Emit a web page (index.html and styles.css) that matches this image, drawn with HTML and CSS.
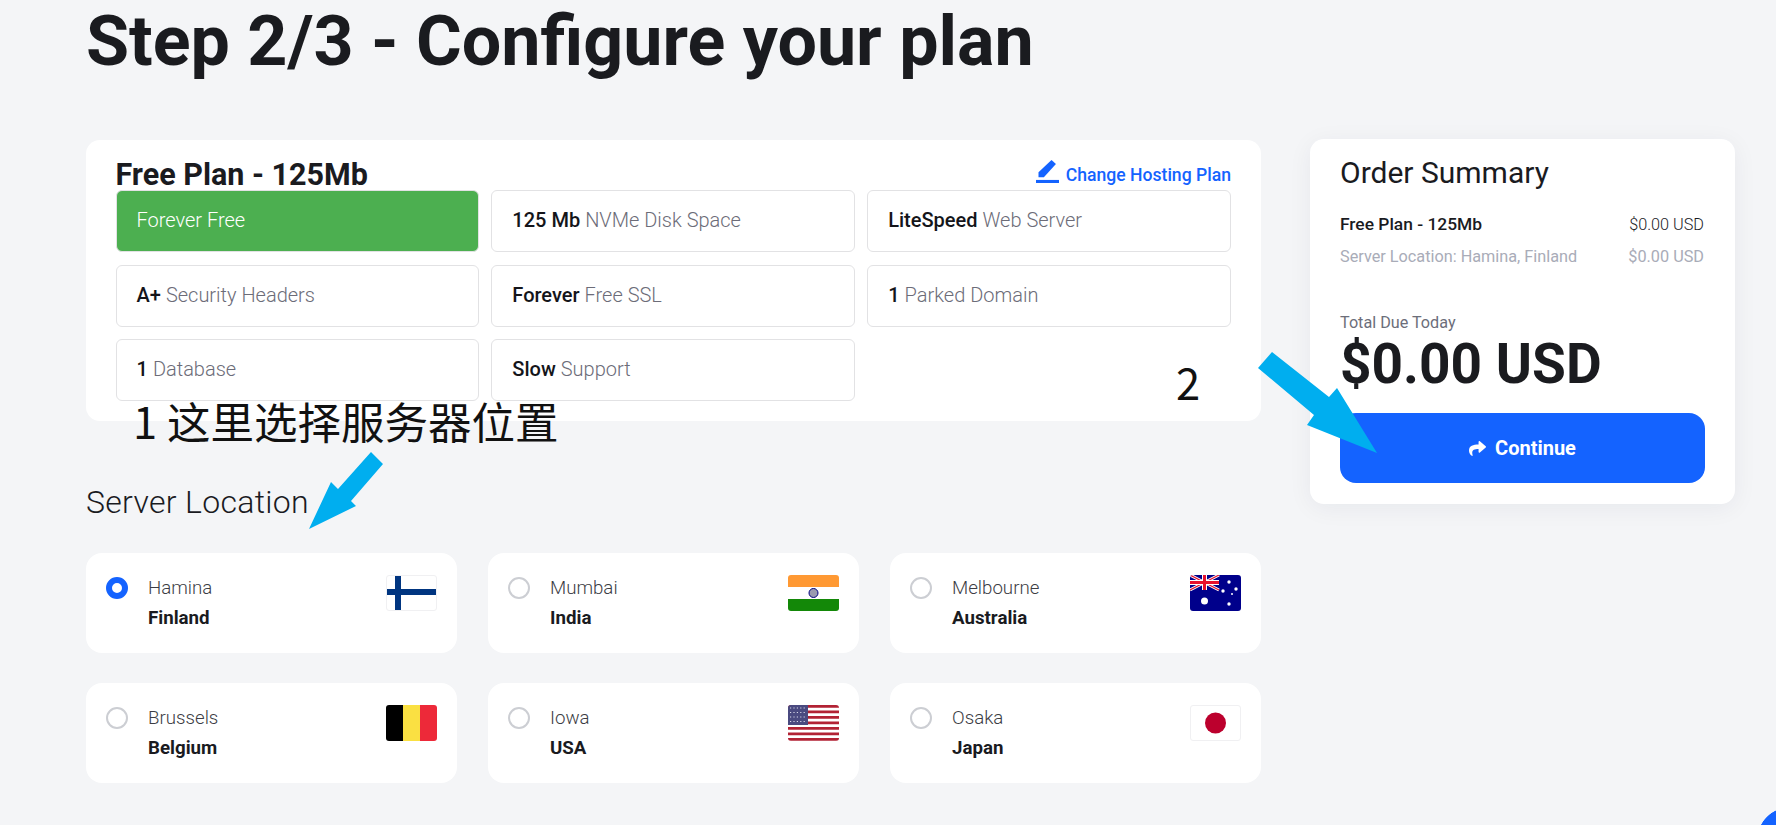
FILE: index.html
```html
<!DOCTYPE html>
<html lang="en">
<head>
  <meta charset="UTF-8">
  <title>Step 2/3 - Configure your plan</title>
  <link rel="stylesheet" href="styles.css">
</head>
<body>
  <h1 class="page-title">Step 2/3 - Configure your plan</h1>

  <div class="layout">
    <div class="main-col">
      <section class="plan-card">
        <div class="plan-head">
          <h2 class="plan-name">Free Plan - 125Mb</h2>
          <a class="change-link" href="#">
            <svg class="pencil" viewBox="0 0 24 24"><path d="M16.2 0l4.6 4.3-12.6 13.6H2.600v-5z"/><rect x="0" y="20.800" width="24" height="3.200"/></svg>
            Change Hosting Plan
          </a>
        </div>
        <div class="feature-grid">
          <div class="feature feature-green">Forever Free</div>
          <div class="feature"><b>125 Mb</b> NVMe Disk Space</div>
          <div class="feature"><b>LiteSpeed</b> Web Server</div>
          <div class="feature"><b>A+</b> Security Headers</div>
          <div class="feature"><b>Forever</b> Free SSL</div>
          <div class="feature"><b>1</b> Parked Domain</div>
          <div class="feature"><b>1</b> Database</div>
          <div class="feature"><b>Slow</b> Support</div>
        </div>
      </section>

      <h2 class="section-title">Server Location</h2>
      <div class="location-grid">
        <label class="location">
          <span class="radio radio-on"></span>
          <span class="location-text"><span class="city">Hamina</span><b class="country">Finland</b></span>
          <svg class="flag flag-light" viewBox="0 0 51 36"><rect width="51" height="36" fill="#fff"/><rect y="14" width="51" height="6" fill="#003580"/><rect x="9" width="6" height="36" fill="#003580"/></svg>
        </label>
        <label class="location">
          <span class="radio"></span>
          <span class="location-text"><span class="city">Mumbai</span><b class="country">India</b></span>
          <svg class="flag" viewBox="0 0 51 36"><rect width="51" height="12" fill="#ff9933"/><rect y="12" width="51" height="12" fill="#fff"/><rect y="24" width="51" height="12" fill="#138808"/><circle cx="25.500" cy="18" r="4.500" fill="#9a9ab0" stroke="#000080"/></svg>
        </label>
        <label class="location">
          <span class="radio"></span>
          <span class="location-text"><span class="city">Melbourne</span><b class="country">Australia</b></span>
          <svg class="flag" viewBox="0 0 51 36">
            <rect width="51" height="36" fill="#00008b"/>
            <path d="M0 0l29 15M29 0L0 15" stroke="#fff" stroke-width="3"/>
            <path d="M0 0l29 15M29 0L0 15" stroke="#e8112d" stroke-width="1.200"/>
            <path d="M14.500 0v15M0 7.500h29" stroke="#fff" stroke-width="5"/>
            <path d="M14.500 0v15M0 7.500h29" stroke="#e8112d" stroke-width="3"/>
            <circle cx="14.500" cy="26" r="3.500" fill="#fff"/>
            <circle cx="39" cy="7" r="1.700" fill="#fff"/>
            <circle cx="33" cy="16" r="1.700" fill="#fff"/>
            <circle cx="46" cy="14" r="1.700" fill="#fff"/>
            <circle cx="42" cy="19" r="1" fill="#fff"/>
            <circle cx="39" cy="29" r="1.700" fill="#fff"/>
          </svg>
        </label>
        <label class="location">
          <span class="radio"></span>
          <span class="location-text"><span class="city">Brussels</span><b class="country">Belgium</b></span>
          <svg class="flag" viewBox="0 0 51 36"><rect width="17" height="36" fill="#000"/><rect x="17" width="17" height="36" fill="#fae042"/><rect x="34" width="17" height="36" fill="#ed2939"/></svg>
        </label>
        <label class="location">
          <span class="radio"></span>
          <span class="location-text"><span class="city">Iowa</span><b class="country">USA</b></span>
          <svg class="flag" viewBox="0 0 51 36">
            <rect width="51" height="36" fill="#fff"/>
            <path d="M0 1.400h51M0 6.900h51M0 12.400h51M0 17.900h51M0 23.400h51M0 28.900h51M0 34.400h51" stroke="#b22234" stroke-width="2.800"/>
            <rect width="20" height="20" fill="#4a4a80"/>
            <path d="M2 3h16M2 7.500h16M2 12h16M2 16.500h16" stroke="#d8d8e8" stroke-width="1.200" stroke-dasharray="1.200 2.200"/>
          </svg>
        </label>
        <label class="location">
          <span class="radio"></span>
          <span class="location-text"><span class="city">Osaka</span><b class="country">Japan</b></span>
          <svg class="flag flag-light" viewBox="0 0 51 36"><rect width="51" height="36" fill="#fff"/><circle cx="25.500" cy="18" r="10.500" fill="#bc002d"/></svg>
        </label>
      </div>
    </div>

    <aside class="summary-card">
      <h2 class="summary-title">Order Summary</h2>
      <div class="summary-row"><span class="summary-plan">Free Plan - 125Mb</span><span>$0.00 USD</span></div>
      <div class="summary-row summary-muted"><span>Server Location: Hamina, Finland</span><span>$0.00 USD</span></div>
      <div class="total-label">Total Due Today</div>
      <div class="total-value">$0.00 USD</div>
      <button class="continue-btn">
        <svg class="share" viewBox="0 0 512 512"><path d="M503.691 189.836L327.687 37.851C312.281 24.546 288 35.347 288 56.015v80.053C127.371 137.907 0 170.1 0 322.326c0 61.441 39.581 122.309 83.333 154.132 13.653 9.931 33.111-2.533 28.077-18.631C66.066 312.814 132.917 274.316 288 272.085V360c0 20.7 24.3 31.453 39.687 18.164l176.004-152c11.071-9.562 11.086-26.753 0-36.328z"/></svg>
        Continue
      </button>
    </aside>
  </div>

  <!-- notes drawn over the screenshot -->
  <div class="note note-one">1 这里选择服务器位置</div>
  <div class="note note-two">2</div>
  <svg class="arrows" viewBox="0 0 1776 825">
    <polygon points="371,452 383,464 351,501 356,506 309,529 331,482 338,489"/>
    <polygon points="1272,352 1329,397 1337,388 1377,453 1307,425 1314,415 1258,368"/>
  </svg>
  <div class="chat-bubble"></div>
</body>
</html>
```

FILE: styles.css
```css
html, body {
  margin: 0;
  height: 825px;
  overflow: hidden;
}
body {
  position: relative;
  box-sizing: border-box;
  background-color: #f4f5f7;
  color: #1a1b1f;
  font-family: Roboto, "Liberation Sans", sans-serif;
  padding-left: 86px;
}
b {
  font-weight: 500;
  color: #14151a;
}
.page-title {
  margin: 0;
  height: 139px;
  font-size: 70px;
  font-weight: 700;
  line-height: 82px;
}
.layout {
  display: flex;
  gap: 49px;
  align-items: flex-start;
}
.main-col {
  width: 1175px;
}
.plan-card {
  box-sizing: border-box;
  height: 281px;
  margin-top: 1px;
  padding: 18px 30px 0 29.500px;
  background-color: #fff;
  border-radius: 14px;
}
.plan-head {
  display: flex;
  justify-content: space-between;
  height: 31px;
}
.plan-name {
  margin: 0;
  font-size: 30.500px;
  font-weight: 700;
  line-height: 33px;
}
.change-link {
  display: flex;
  align-items: flex-end;
  align-self: flex-end;
  gap: 7px;
  margin-bottom: 2px;
  color: #1463ff;
  font-size: 17.600px;
  font-weight: 500;
  line-height: 24px;
  text-decoration: none;
}
.pencil {
  width: 23px;
  height: 23px;
  margin-bottom: 4px;
  fill: #1463ff;
}
.feature-grid {
  display: grid;
  grid-template-columns: repeat(3, 1fr);
  grid-auto-rows: 62px;
  gap: 12.500px 12px;
  margin-top: 1px;
}
.feature {
  display: flex;
  align-items: center;
  gap: 5px;
  padding: 0 20px 2px;
  background-color: #fff;
  border: 1px solid #e2e2e4;
  border-radius: 6px;
  color: #6c6c78;
  font-size: 20px;
  font-weight: 300;
}
.feature-green {
  background-color: #4caf50;
  color: #fff;
}
.section-title {
  margin: 59px 0 0;
  height: 73px;
  font-size: 32px;
  font-weight: 300;
  line-height: 44px;
  letter-spacing: 0.3px;
}
.location-grid {
  display: grid;
  grid-template-columns: repeat(3, 371px);
  grid-auto-rows: 100px;
  gap: 30px 31px;
}
.location {
  display: flex;
  align-items: flex-start;
  padding: 24px 20px 0 20px;
  background-color: #fff;
  border-radius: 16px;
}
.radio {
  box-sizing: border-box;
  flex: none;
  width: 22px;
  height: 22px;
  margin: 0 20px 0 0;
  background-color: #fff;
  border: 2px solid #ccced3;
  border-radius: 50%;
}
.radio-on {
  border: 6px solid #1463ff;
}
.location-text {
  flex: 1;
  display: flex;
  flex-direction: column;
  gap: 7px;
  font-size: 18.700px;
}
.city {
  font-weight: 300;
  line-height: 23px;
  color: #3c3d44;
}
.country {
  font-weight: 700;
  line-height: 23px;
  color: #1a1b1f;
}
.flag {
  width: 51px;
  height: 36px;
  margin-top: -2px;
  border-radius: 3px;
}
.flag-light {
  outline: 1px solid #f0f0f2;
  outline-offset: -1px;
}
.summary-card {
  box-sizing: border-box;
  width: 425px;
  height: 365px;
  padding: 15px 31px 0 30px;
  background-color: #fff;
  border-radius: 14px;
  box-shadow: 0 4px 24px rgba(20, 30, 60, 0.06);
}
.summary-title {
  margin: 0 0 16px;
  font-size: 30px;
  font-weight: 400;
  line-height: 38px;
}
.summary-row {
  display: flex;
  justify-content: space-between;
  align-items: center;
  height: 32px;
  font-size: 16.250px;
  font-weight: 300;
}
.summary-plan {
  font-size: 17.400px;
  font-weight: 500;
}
.summary-muted {
  color: #a9acb8;
  font-weight: 400;
}
.total-label {
  margin-top: 41px;
  color: #6c6e7a;
  font-size: 16.200px;
  line-height: 20px;
}
.total-value {
  font-size: 55px;
  font-weight: 700;
  line-height: 63px;
}
.continue-btn {
  display: flex;
  align-items: center;
  justify-content: center;
  gap: 9px;
  width: 365px;
  height: 70px;
  margin-top: 17px;
  background-color: #1463ff;
  color: #fff;
  border: none;
  border-radius: 16px;
  font-family: inherit;
  font-size: 20px;
  font-weight: 700;
}
.share {
  width: 17px;
  height: 17px;
  fill: #fff;
}
.note {
  position: absolute;
  color: #111;
  font-family: "Noto Sans CJK SC", "Noto Sans", sans-serif;
  font-weight: 400;
  font-size: 43.500px;
  line-height: 56px;
  white-space: nowrap;
}
.note-one {
  left: 133px;
  top: 393px;
}
.note-two {
  left: 1176px;
  top: 354px;
}
.arrows {
  position: absolute;
  left: 0;
  top: 0;
  width: 1776px;
  height: 825px;
  fill: #00aeef;
}
/* only the corner of the round widget shows in the window */
.chat-bubble {
  position: absolute;
  right: 0;
  bottom: 0;
  width: 19px;
  height: 18px;
  background: radial-gradient(circle 33px at 33px 33px, #1463ff 98%, transparent 100%);
}
```
